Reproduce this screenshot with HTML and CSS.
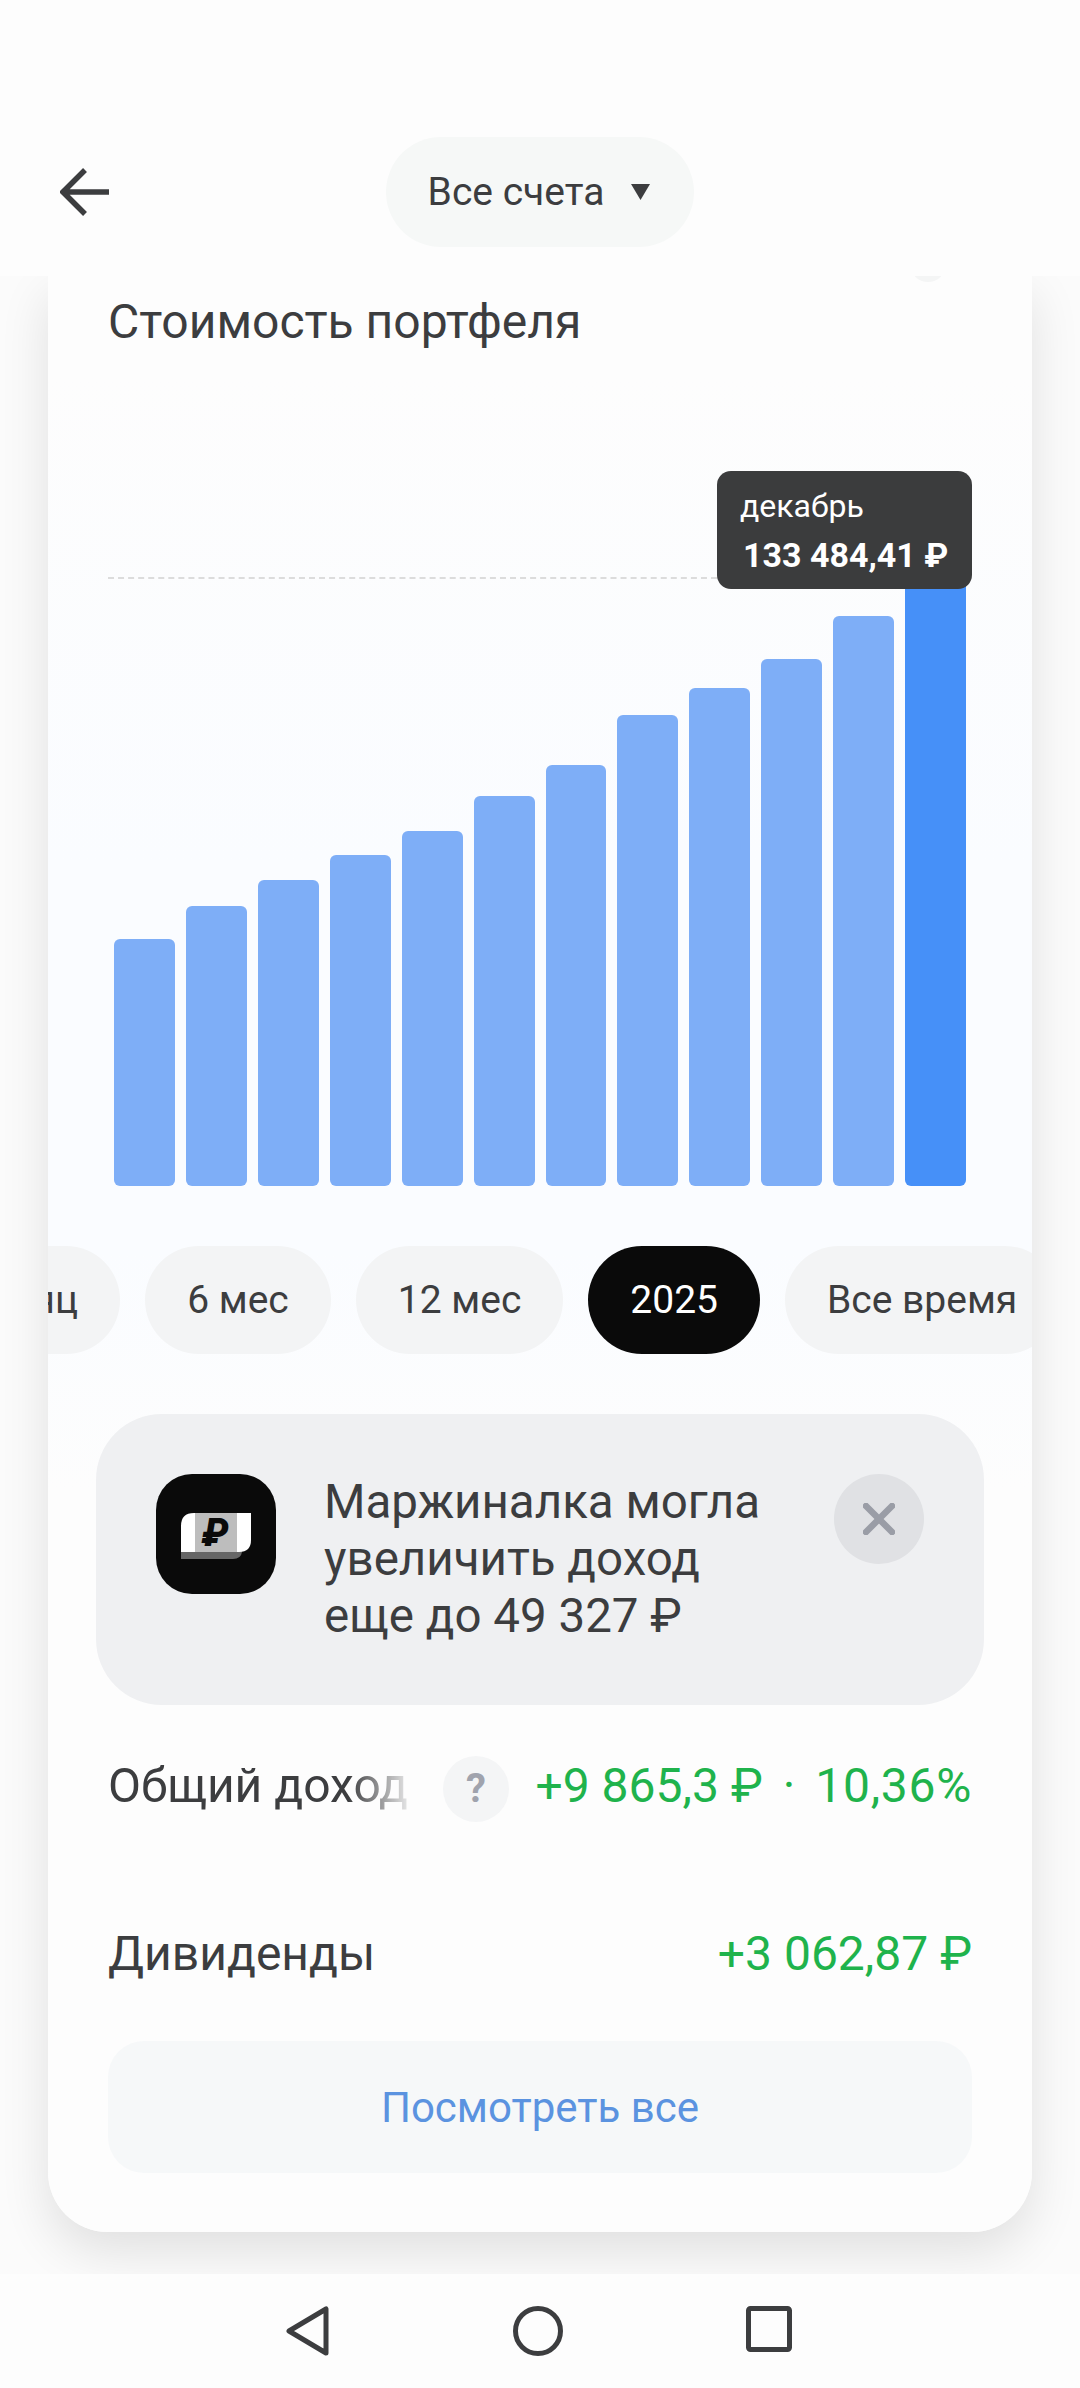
FILE: index.html
```html
<!DOCTYPE html>
<html lang="ru">
<head>
<meta charset="UTF-8" />
<meta name="viewport" content="width=device-width, initial-scale=1" />
<title>Стоимость портфеля</title>
<link rel="stylesheet" href="styles.css">
</head>
<body>
  <header class="top-bar">
    <svg class="back-icon" width="50" height="50" viewBox="0 0 50 50">
      <path d="M49 25H3M25 3L3 25l22 22" />
    </svg>
    <div class="account-pill">
      <span>Все счета</span>
      <svg width="21" height="18" viewBox="0 0 21 18"><path d="M1 1h19L10.500 17z" /></svg>
    </div>
  </header>

  <main class="content">
    <section class="card">
      <span class="peek-circle"></span>
      <h2 class="card-title">Стоимость портфеля</h2>

      <!-- График по месяцам -->
      <div class="chart">
        <div class="chart-line"></div>
        <div class="bars">
          <div class="bar" style="height:247px"></div>
          <div class="bar" style="height:280px"></div>
          <div class="bar" style="height:306px"></div>
          <div class="bar" style="height:331px"></div>
          <div class="bar" style="height:355px"></div>
          <div class="bar" style="height:390px"></div>
          <div class="bar" style="height:421px"></div>
          <div class="bar" style="height:471px"></div>
          <div class="bar" style="height:498px"></div>
          <div class="bar" style="height:527px"></div>
          <div class="bar" style="height:570px"></div>
          <div class="bar current" style="height:620px"></div>
        </div>
        <div class="chart-tip">
          <div class="tip-month">декабрь</div>
          <div class="tip-value">133 484,41 ₽</div>
        </div>
      </div>

      <!-- Периоды -->
      <div class="periods">
        <div class="periods-row">
          <button class="chip">1 месяц</button>
          <button class="chip">6 мес</button>
          <button class="chip">12 мес</button>
          <button class="chip active">2025</button>
          <button class="chip">Все время</button>
        </div>
      </div>

      <!-- Баннер -->
      <div class="promo">
        <svg class="promo-icon" width="120" height="120" viewBox="0 0 120 120">
          <rect width="120" height="120" rx="36" fill="#0a0a0a" />
          <path d="M25 70h61v8q-1 7-9 7H25z" fill="#666" />
          <path d="M25 52q0-13 13-13h57v27q0 12-12 12H25z" fill="#fff" />
          <rect x="39" y="39" width="42" height="39" fill="#bdbdbd" />
          <text x="59" y="72" text-anchor="middle" class="promo-glyph">₽</text>
        </svg>
        <p class="promo-text">Маржиналка могла<br>увеличить доход<br>еще до 49 327 ₽</p>
        <button class="promo-close">
          <svg width="32" height="32" viewBox="0 0 32 32"><path d="M3 3l26 26M29 3L3 29" /></svg>
        </button>
      </div>

      <div class="stat">
        <span class="stat-label fade">Общий доход</span>
        <span class="hint">?</span>
        <span class="stat-value">
          <span>+9 865,3 ₽</span>
          <span class="dot">·</span>
          <span class="percent">10,36%</span>
        </span>
      </div>
      <div class="stat">
        <span class="stat-label">Дивиденды</span>
        <span class="stat-value">+3 062,87 ₽</span>
      </div>

      <a class="see-all" href="#">Посмотреть все</a>
    </section>
  </main>

  <footer class="nav-bar">
    <svg width="44" height="50" viewBox="0 0 44 50"><path d="M40 3v44L3 25z" /></svg>
    <svg width="50" height="50" viewBox="0 0 50 50"><circle cx="25" cy="25" r="22.500" /></svg>
    <svg width="46" height="46" viewBox="0 0 46 46"><rect x="2.500" y="2.500" width="41" height="41" rx="2" /></svg>
  </footer>
</body>
</html>
```

FILE: styles.css
```css
* {
  box-sizing: border-box;
}
body {
  font-family: Roboto, 'Noto Sans', sans-serif;
  margin: 0;
  height: 2388px;
  display: flex;
  flex-direction: column;
  background: #fdfdfd;
  color: #3c3d3f;
  overflow: hidden;
}
button {
  font-family: inherit;
  border: none;
  padding: 0;
}

/* Верхняя панель */
.top-bar {
  position: relative;
  z-index: 2;
  height: 276px;
  flex-shrink: 0;
  padding-top: 137px;
  display: flex;
  justify-content: center;
  align-items: flex-start;
  background: #fdfdfd;
}
.back-icon {
  position: absolute;
  left: 60px;
  top: 167px;
  fill: none;
  stroke: #3c3d3f;
  stroke-width: 5.5;
}
.account-pill {
  height: 110px;
  padding: 0 43px 0 42px;
  display: flex;
  align-items: center;
  gap: 26px;
  border-radius: 55px;
  background: #f6f8f7;
  font-size: 39px;
}
.account-pill svg {
  fill: #3c3d3f;
}

/* Основная карточка */
.content {
  flex: 1;
  overflow: hidden;
  padding: 0 48px;
  background: #fbfbfb;
}
.card {
  position: relative;
  height: 1956px;
  padding-top: 16px;
  border-radius: 0 0 60px 60px;
  background: linear-gradient(180deg, #fdfdfd 5%, #fafcff 30%, #fafcff 50%, #fdfdfd 62%);
  box-shadow: 0 20px 50px rgba(0, 0, 0, 0.11);
}
.peek-circle {
  position: absolute;
  left: 862px;
  top: -30px;
  width: 36px;
  height: 36px;
  border-radius: 50%;
  background: #f4f5f5;
}
.card-title {
  margin: 0;
  padding-left: 60px;
  font-size: 48px;
  font-weight: 400;
  line-height: 60px;
}

/* График */
.chart {
  position: relative;
  height: 715px;
  margin: 119px 60px 0;
  display: flex;
  align-items: flex-end;
}
.chart-line {
  position: absolute;
  left: 0;
  right: 255px;
  top: 106px;
  border-top: 2px dashed #dcdcdc;
}
.bars {
  width: 100%;
  padding: 0 6px;
  display: flex;
  align-items: flex-end;
  gap: 11px;
}
.bar {
  flex: 1;
  border-radius: 6px;
  background: #7eaef7;
}
.bar.current {
  background: #4690f8;
}
.chart-tip {
  position: absolute;
  right: 0;
  top: 0;
  width: 255px;
  height: 118px;
  padding: 14px 0 0 23px;
  border-radius: 14px;
  background: #3b3c3d;
  color: #fff;
}
.tip-month {
  font-size: 32px;
  line-height: 42px;
}
.tip-value {
  margin: 7px 0 0 3px;
  font-size: 34px;
  font-weight: 700;
  line-height: 42px;
}

/* Периоды */
.periods {
  margin-top: 60px;
  overflow: hidden;
}
.periods-row {
  display: flex;
  gap: 25px;
  margin-left: -158px;
}
.chip {
  flex-shrink: 0;
  height: 108px;
  padding: 0 42px;
  border-radius: 54px;
  background: #f3f4f5;
  color: #3c3d3f;
  font-size: 39px;
}
.chip.active {
  background: #0a0a0a;
  color: #fff;
}

/* Баннер */
.promo {
  margin: 60px 48px 0;
  padding: 60px;
  display: flex;
  align-items: flex-start;
  border-radius: 66px;
  background: #eff0f2;
}
.promo-icon {
  flex-shrink: 0;
}
.promo-glyph {
  font-size: 38px;
  font-weight: 900;
  font-style: italic;
  fill: #0a0a0a;
}
.promo-text {
  flex: 1;
  margin: 0 0 0 48px;
  font-size: 47.500px;
  line-height: 57px;
}
.promo-close {
  flex-shrink: 0;
  width: 90px;
  height: 90px;
  display: flex;
  align-items: center;
  justify-content: center;
  border-radius: 50%;
  background: #e0e1e4;
}
.promo-close svg {
  fill: none;
  stroke: #9a9da6;
  stroke-width: 6.5;
  stroke-linecap: round;
}

/* Доход */
.stat {
  height: 66px;
  margin: 51px 60px 0;
  display: flex;
  align-items: center;
  font-size: 48px;
  line-height: 60px;
}
.stat > span:not(.hint) {
  position: relative;
  top: -3px;
}
.stat + .stat {
  margin-top: 102px;
}
.stat-label {
  white-space: nowrap;
}
.stat-label.fade {
  width: 308px;
  overflow: hidden;
  -webkit-mask-image: linear-gradient(90deg, #000 78%, transparent 100%);
  mask-image: linear-gradient(90deg, #000 78%, transparent 100%);
}
.hint {
  width: 66px;
  height: 66px;
  margin-left: 27px;
  display: flex;
  align-items: center;
  justify-content: center;
  border-radius: 50%;
  background: #f4f5f6;
  color: #a0a3ad;
  font-size: 40px;
  font-weight: 700;
}
.stat-value {
  margin-left: auto;
  color: #1fb34c;
  white-space: nowrap;
  display: flex;
  gap: 20px;
}
.percent {
  letter-spacing: 0.7px;
}
.see-all {
  height: 132px;
  margin: 51px 60px 0;
  display: flex;
  align-items: center;
  justify-content: center;
  border-radius: 36px;
  background: #f6f8f9;
  color: #5b93e0;
  font-size: 42px;
  text-decoration: none;
}

/* Системная навигация */
.nav-bar {
  position: relative;
  z-index: 2;
  height: 114px;
  flex-shrink: 0;
  padding: 32px 0 0 286px;
  display: flex;
  align-items: flex-start;
  background: #fdfdfd;
  gap: 183px;
}
.nav-bar svg {
  fill: none;
  stroke: #3c3d3f;
  stroke-width: 5;
  stroke-linejoin: round;
}
```
